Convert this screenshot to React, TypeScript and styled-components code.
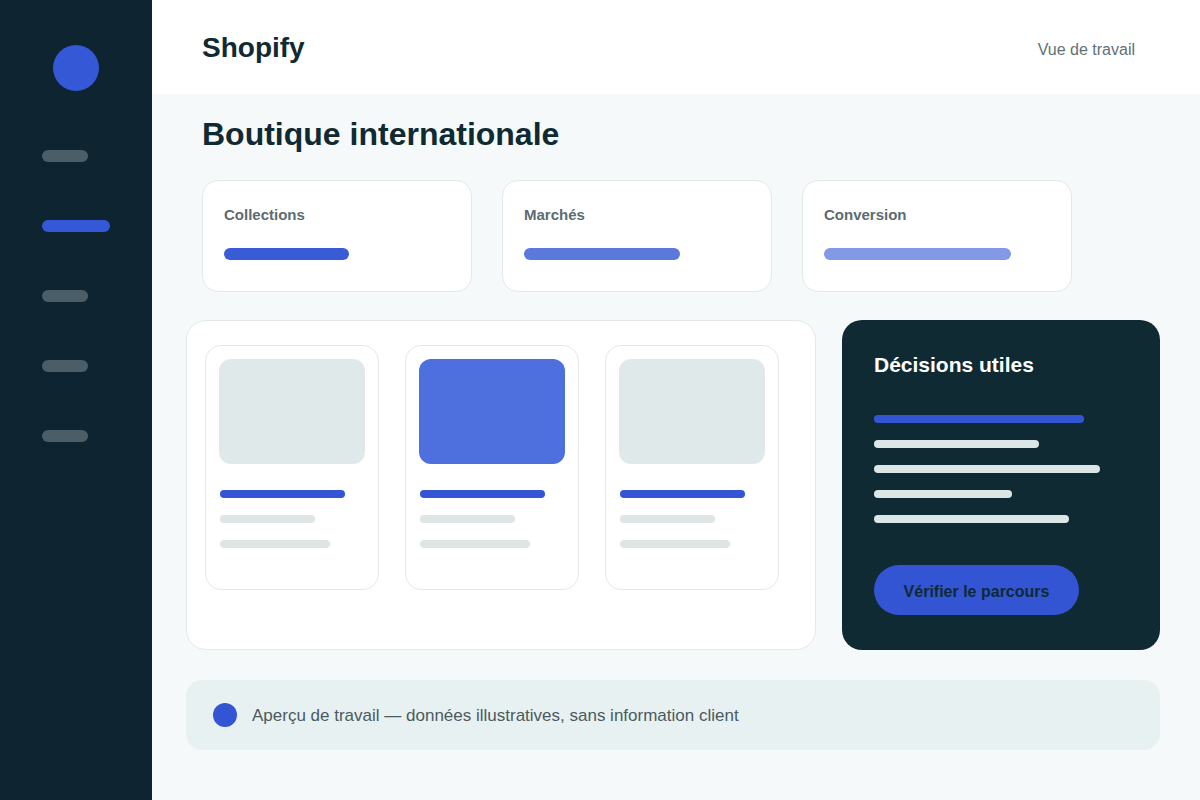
import React from "react";
import styled, { createGlobalStyle } from "styled-components";

const Global = createGlobalStyle`
  html, body { margin: 0; padding: 0; }
  body { font-family: "Liberation Sans", Arial, sans-serif; background: #f6f9f9; }
  * { box-sizing: border-box; }
`;

const Shell = styled.div`
  display: flex;
  width: 1200px;
  height: 800px;
  overflow: hidden;
`;

const Sidebar = styled.aside`
  width: 152px;
  flex-shrink: 0;
  background: #0e2430;
  display: flex;
  flex-direction: column;
  align-items: center;
  padding-top: 45px;
`;

const Logo = styled.div`
  width: 46px;
  height: 46px;
  border-radius: 50%;
  background: #3558d6;
  margin-bottom: 59px;
`;

const NavList = styled.nav`
  display: flex;
  flex-direction: column;
  gap: 58px;
  width: 100%;
  padding-left: 42px;
`;

const NavItem = styled.div<{ $active?: boolean }>`
  height: 12px;
  border-radius: 6px;
  width: ${(p) => (p.$active ? 68 : 46)}px;
  background: ${(p) => (p.$active ? "#3558d6" : "#4b5e67")};
`;

const Main = styled.div`
  flex: 1;
  display: flex;
  flex-direction: column;
`;

const Header = styled.header`
  height: 94px;
  background: #ffffff;
  display: flex;
  align-items: center;
  justify-content: space-between;
  padding: 3px 65px 0 50px;
`;

const Brand = styled.div`
  font-size: 28px;
  font-weight: 700;
  color: #102a33;
  margin-top: -2px;
`;

const HeaderLink = styled.div`
  font-size: 16px;
  color: #5f7078;
  margin-top: 3px;
`;

const Content = styled.main`
  display: flex;
  flex-direction: column;
  padding: 22px 40px 0 34px;
`;

const Title = styled.h1`
  margin: 0 0 27px 16px;
  font-size: 32px;
  line-height: 37px;
  font-weight: 700;
  color: #102a33;
`;

const StatRow = styled.div`
  display: flex;
  gap: 30px;
  padding-left: 16px;
  margin-bottom: 28px;
`;

const StatCard = styled.div`
  width: 270px;
  height: 112px;
  background: #ffffff;
  border: 1px solid #e3e9e9;
  border-radius: 16px;
  padding: 25px 21px 0;
  display: flex;
  flex-direction: column;
`;

const StatLabel = styled.div`
  font-size: 15px;
  font-weight: 700;
  color: #5c6c72;
  line-height: 18px;
  margin-bottom: 24px;
`;

const Bar = styled.div<{ $w: number; $h: number; $c: string }>`
  width: ${(p) => p.$w}px;
  height: ${(p) => p.$h}px;
  border-radius: ${(p) => p.$h / 2}px;
  background: ${(p) => p.$c};
  flex-shrink: 0;
`;

const Row = styled.div`
  display: flex;
  gap: 26px;
  margin-bottom: 30px;
`;

const Gallery = styled.section`
  width: 630px;
  height: 330px;
  background: #ffffff;
  border: 1px solid #e3e9e9;
  border-radius: 20px;
  padding: 24px 18px;
  display: flex;
  gap: 26px;
  align-items: flex-start;
`;

const Product = styled.div`
  width: 174px;
  height: 245px;
  border: 1px solid #e3e9e9;
  border-radius: 16px;
  padding: 13px;
  display: flex;
  flex-direction: column;
`;

const Thumb = styled.div<{ $accent?: boolean }>`
  height: 105px;
  border-radius: 12px;
  background: ${(p) => (p.$accent ? "#4e6fde" : "#e0e9e9")};
  margin-bottom: 26px;
`;

const Lines = styled.div<{ $inset?: number }>`
  display: flex;
  flex-direction: column;
  gap: 17px;
  padding-left: ${(p) => p.$inset ?? 0}px;
`;

const Insight = styled.section`
  width: 318px;
  height: 330px;
  background: #0f2a33;
  border-radius: 20px;
  padding: 33px 32px 0;
  display: flex;
  flex-direction: column;
`;

const InsightTitle = styled.h2`
  margin: 0 0 38px;
  font-size: 21px;
  line-height: 24px;
  font-weight: 700;
  color: #ffffff;
`;

const Button = styled.button`
  margin-top: 42px;
  width: 205px;
  height: 50px;
  border: none;
  border-radius: 25px;
  background: #3355d4;
  color: #0f2a33;
  font-family: "Liberation Sans", Arial, sans-serif;
  font-size: 16px;
  font-weight: 700;
  padding: 3px 0 0;
  cursor: pointer;
`;

const Notice = styled.div`
  width: 974px;
  height: 70px;
  border-radius: 16px;
  background: #e8f1f1;
  display: flex;
  align-items: center;
  padding-left: 27px;
  gap: 15px;
`;

const Dot = styled.span`
  width: 24px;
  height: 24px;
  border-radius: 50%;
  background: #3355d4;
  flex-shrink: 0;
`;

const NoticeText = styled.span`
  font-size: 17px;
  color: #4a5a60;
  margin-top: 2px;
`;

const stats = [
  { label: "Collections", w: 125, c: "#3a5bd6" },
  { label: "Marchés", w: 156, c: "#5b78db" },
  { label: "Conversion", w: 187, c: "#8499e5" },
];

const products = [false, true, false];

const insightLines = [
  { w: 210, c: "#3355d4" },
  { w: 165, c: "#dde6e6" },
  { w: 226, c: "#dde6e6" },
  { w: 138, c: "#dde6e6" },
  { w: 195, c: "#dde6e6" },
];

export default function App() {
  return (
    <>
      <Global />
      <Shell>
        <Sidebar>
          <Logo />
          <NavList>
            <NavItem />
            <NavItem $active />
            <NavItem />
            <NavItem />
            <NavItem />
          </NavList>
        </Sidebar>
        <Main>
          <Header>
            <Brand>Shopify</Brand>
            <HeaderLink>Vue de travail</HeaderLink>
          </Header>
          <Content>
            <Title>Boutique internationale</Title>
            <StatRow>
              {stats.map((s) => (
                <StatCard key={s.label}>
                  <StatLabel>{s.label}</StatLabel>
                  <Bar $w={s.w} $h={12} $c={s.c} />
                </StatCard>
              ))}
            </StatRow>
            <Row>
              <Gallery>
                {products.map((accent, i) => (
                  <Product key={i}>
                    <Thumb $accent={accent} />
                    <Lines $inset={1}>
                      <Bar $w={125} $h={8} $c="#3355d4" />
                      <Bar $w={95} $h={8} $c="#dfe5e5" />
                      <Bar $w={110} $h={8} $c="#dfe5e5" />
                    </Lines>
                  </Product>
                ))}
              </Gallery>
              <Insight>
                <InsightTitle>Décisions utiles</InsightTitle>
                <Lines>
                  {insightLines.map((l, i) => (
                    <Bar key={i} $w={l.w} $h={8} $c={l.c} />
                  ))}
                </Lines>
                <Button>Vérifier le parcours</Button>
              </Insight>
            </Row>
            <Notice>
              <Dot />
              <NoticeText>Aperçu de travail — données illustratives, sans information client</NoticeText>
            </Notice>
          </Content>
        </Main>
      </Shell>
    </>
  );
}
